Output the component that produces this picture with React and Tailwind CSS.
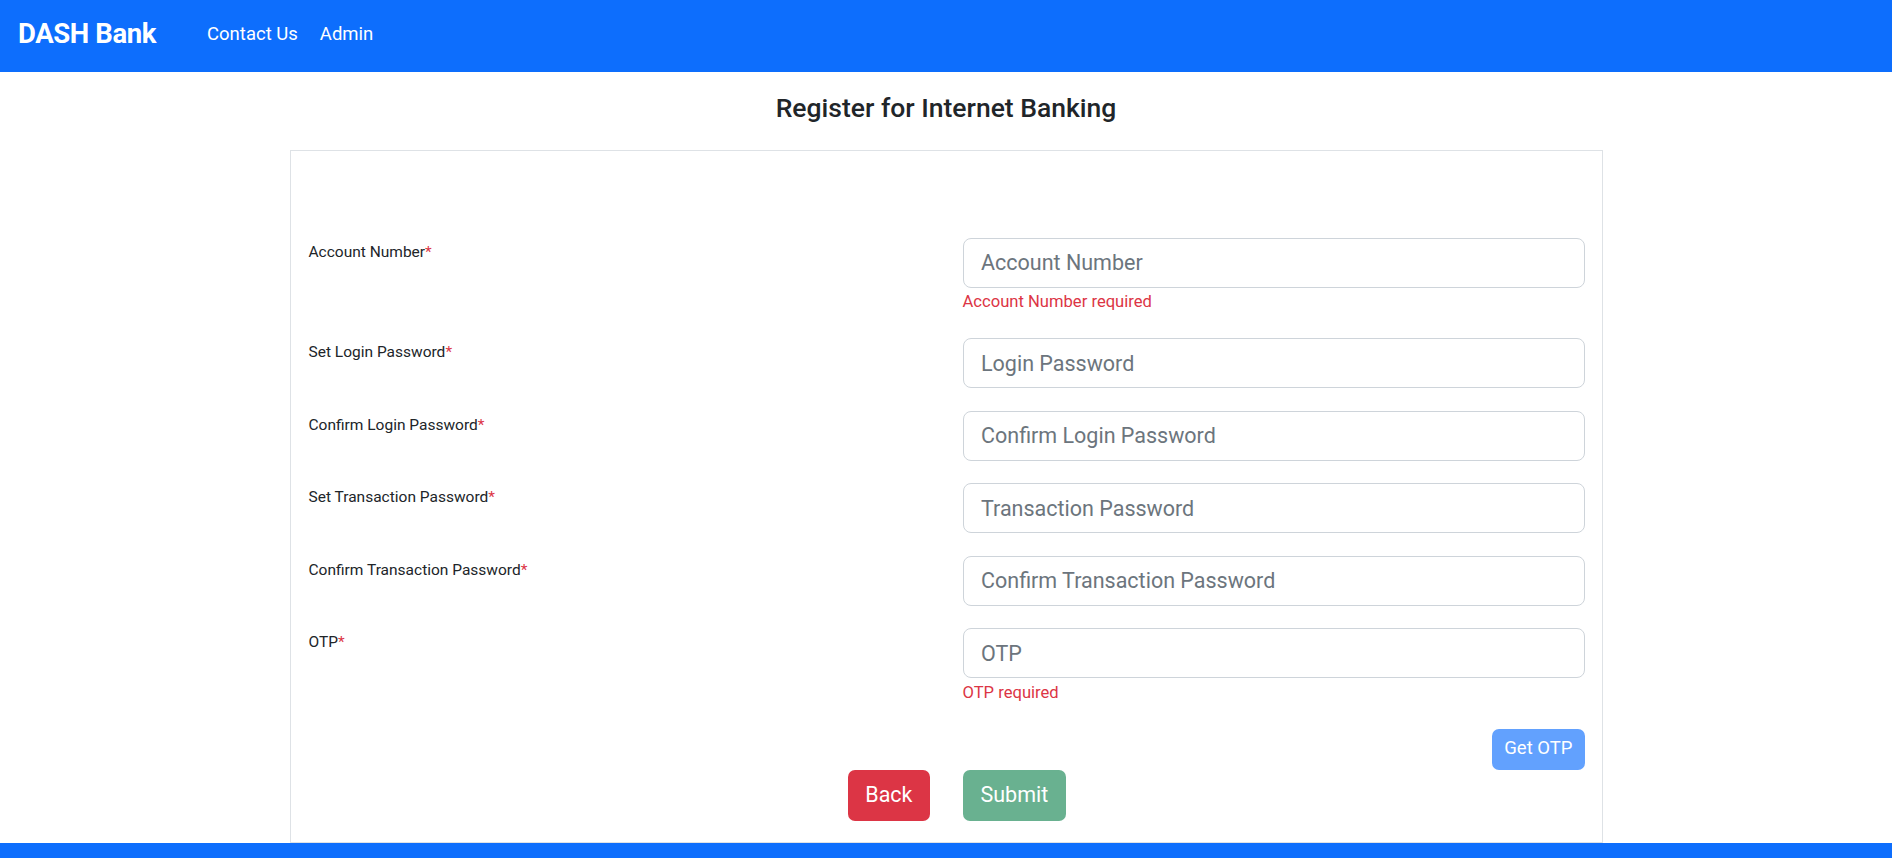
const fields = [
    { label: "Account Number", placeholder: "Account Number", error: "Account Number required" },
    { label: "Set Login Password", placeholder: "Login Password" },
    { label: "Confirm Login Password", placeholder: "Confirm Login Password" },
    { label: "Set Transaction Password", placeholder: "Transaction Password" },
    { label: "Confirm Transaction Password", placeholder: "Confirm Transaction Password" },
    { label: "OTP", placeholder: "OTP", error: "OTP required" }
];

const App = () => {
    return (
        <div className="h-screen flex flex-col overflow-hidden bg-white text-[#212529] font-['Roboto',sans-serif]">
            {/* Navbar */}
            <nav className="h-[72px] shrink-0 bg-[#0d6efd] flex items-center pl-[18px] pb-[4px]">
                <span className="text-white font-bold text-[27.5px] tracking-[-0.4px] leading-none">DASH Bank</span>
                <div className="flex items-center gap-[22px] ml-[51px] text-white text-[18.5px] leading-none">
                    <a href="#">Contact Us</a>
                    <a href="#">Admin</a>
                </div>
            </nav>

            {/* Content */}
            <main className="flex-1 overflow-hidden">
                <h4 className="mt-[20px] mb-[26px] text-center text-[26.5px] font-medium leading-[1.2]">
                    Register for Internet Banking
                </h4>

                <div className="mx-auto w-[1313px] border border-[#dee2e6] pt-[87px] pl-[18px] pr-[17px] pb-[21px]">
                    {fields.map((f, i) => (
                        <div key={i} className="flex items-start mb-[22.5px] last:mb-0">
                            <label className="w-[654px] shrink-0 pt-[3px] text-[15.5px] leading-[1.5]">
                                {f.label}<span className="text-[#dc3545]">*</span>
                            </label>
                            <div className="flex-1">
                                <input
                                    type={i > 0 && i < 5 ? "password" : "text"}
                                    placeholder={f.placeholder}
                                    className="block w-full h-[50px] px-[17.5px] border border-[#ced4da] rounded-[8px] text-[21.5px] placeholder:text-[#6c757d] outline-none"
                                />
                                {f.error && (
                                    <div className="mt-[2.5px] mb-[1.5px] text-[16.6px] leading-[24px] text-[#dc3545]">{f.error}</div>
                                )}
                            </div>
                        </div>
                    ))}

                    <div className="flex justify-end mt-[20px]">
                        <button className="h-[41px] px-[12px] rounded-[7px] bg-[#62a1fe] text-white text-[18.5px]">
                            Get OTP
                        </button>
                    </div>

                    <div className="flex">
                        <div className="w-[654px] shrink-0 flex justify-end pr-[33px]">
                            <button className="h-[51px] px-[17px] rounded-[7px] bg-[#dc3545] text-white text-[21.5px]">
                                Back
                            </button>
                        </div>
                        <button className="h-[51px] px-[18px] rounded-[7px] bg-[#69b190] text-white text-[21.5px]">
                            Submit
                        </button>
                    </div>
                </div>
            </main>

            {/* Footer */}
            <footer className="h-[15px] shrink-0 bg-[#0d6efd]"></footer>
        </div>
    );
};

export default App;
